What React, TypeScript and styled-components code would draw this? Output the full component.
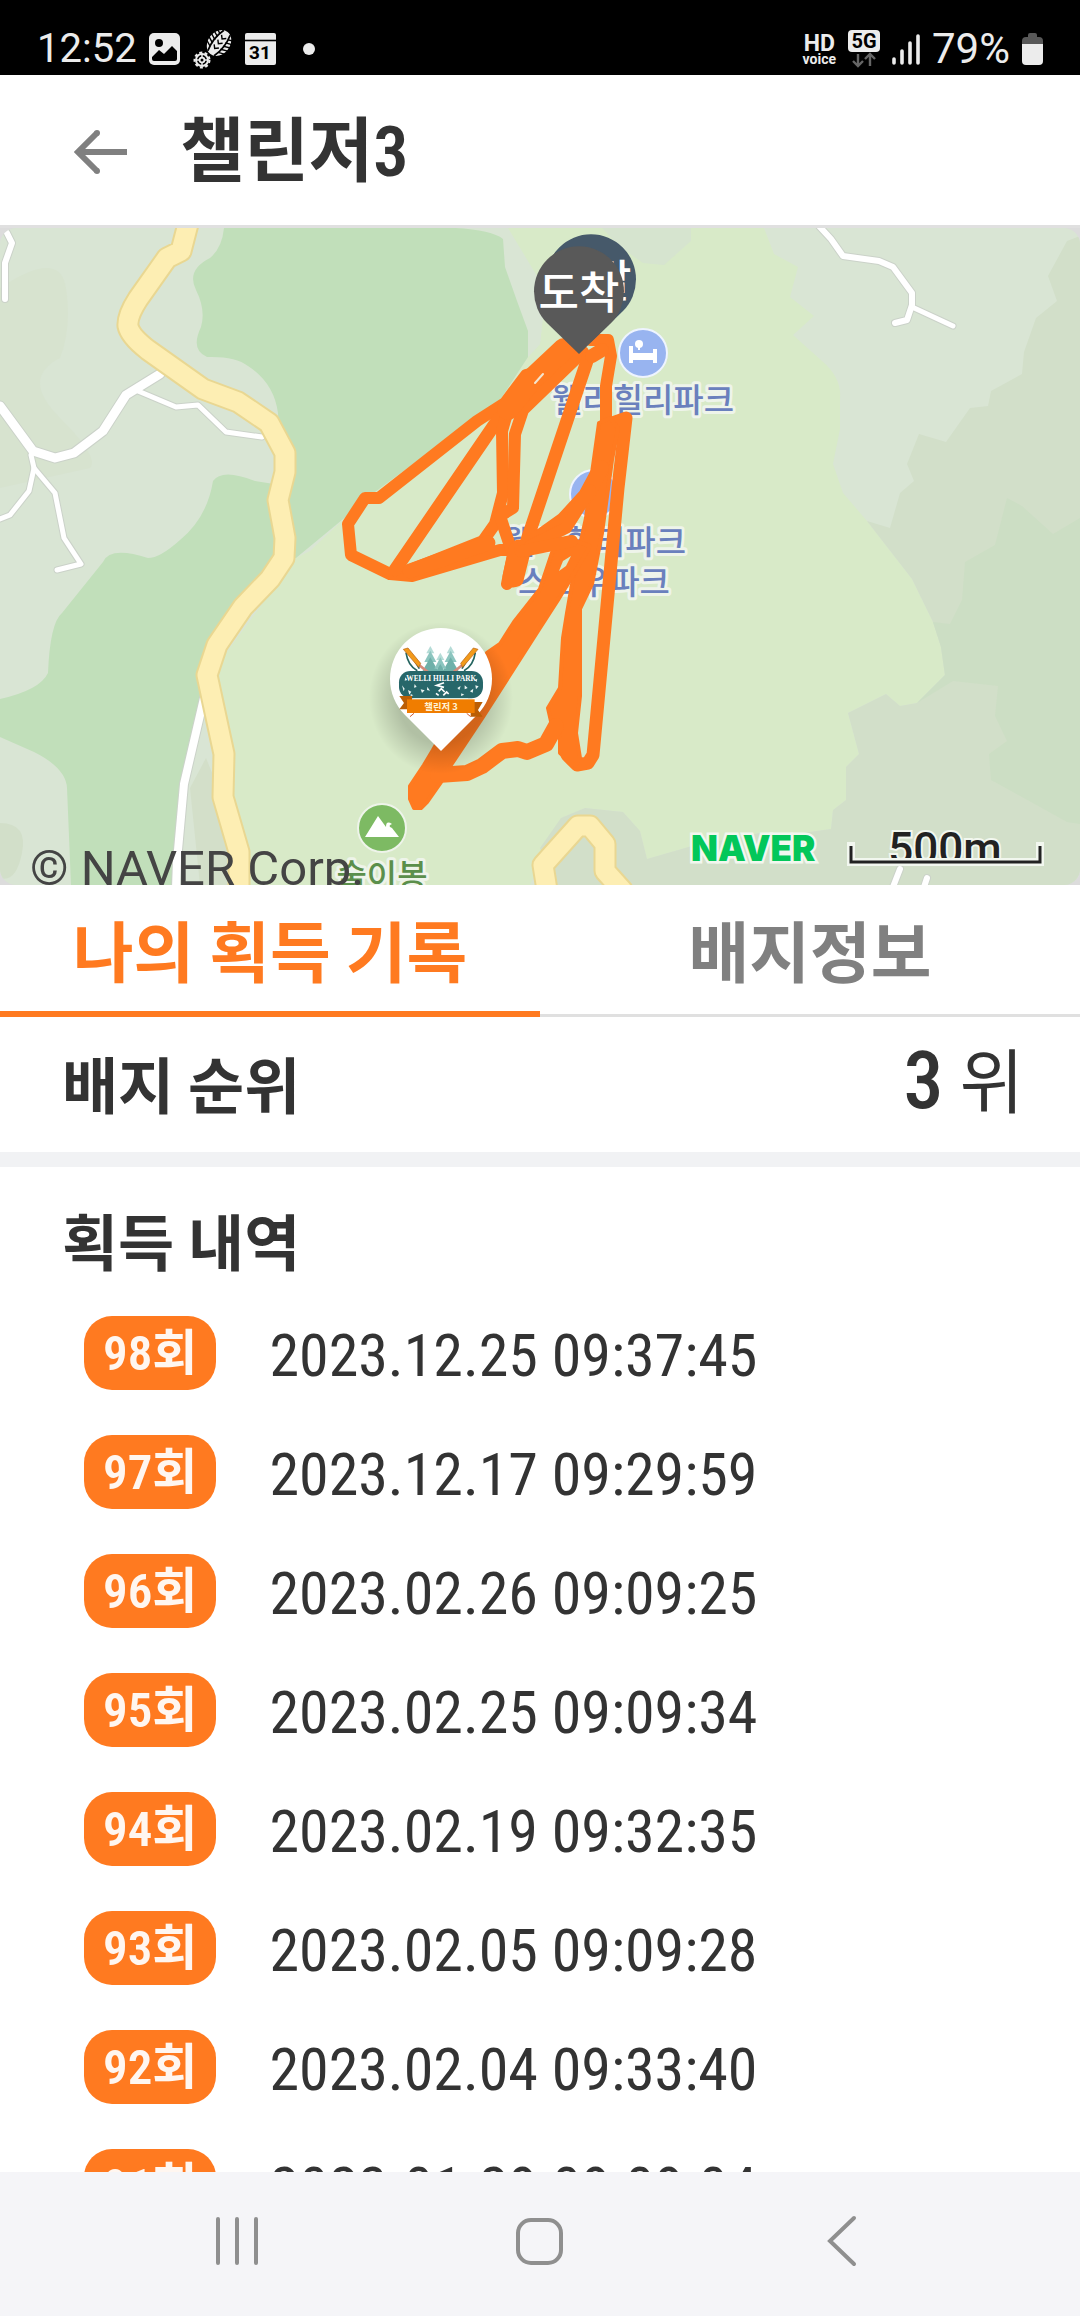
import React from "react";
import styled, { createGlobalStyle } from "styled-components";

const ORANGE = "#ff7a20";
const INK = "#333333";
const KR = `"Noto Sans CJK KR", sans-serif`;
const CONDENSED = `"Roboto Condensed", "Noto Sans CJK KR", Roboto, sans-serif`;

const GlobalStyle = createGlobalStyle`
  * { box-sizing: border-box; }
  body { margin: 0; background: #fff; }
  button { border: 0; padding: 0; background: none; font: inherit; color: inherit; cursor: pointer; }
  h1, h2, ul { margin: 0; padding: 0; }
  svg { display: block; }
`;

const Screen = styled.div`
  display: flex;
  flex-direction: column;
  height: 100vh;
  overflow: hidden;
  background: #fff;
  color: ${INK};
  font-family: ${CONDENSED};
`;

/* ---------- status bar ---------- */

const StatusBar = styled.div`
  flex: none;
  display: flex;
  justify-content: space-between;
  align-items: flex-end;
  height: 75px;
  padding: 0 37px 6px;
  background: #000;
  color: #ececec;
  font-family: Roboto, sans-serif;
`;

const StatusGroup = styled.div<{ $gap: number }>`
  display: flex;
  align-items: center;
  gap: ${(p) => p.$gap}px;
  height: 40px;
`;

const StatusText = styled.span<{ $size: number }>`
  font-size: ${(p) => p.$size}px;
  line-height: 40px;
`;

const HdVoice = styled.span`
  display: flex;
  flex-direction: column;
  align-items: center;
  font-weight: 700;
`;

const HdLine = styled.span<{ $size: number; $line: number }>`
  font-size: ${(p) => p.$size}px;
  line-height: ${(p) => p.$line}px;
`;

/* ---------- header ---------- */

const Header = styled.header`
  flex: none;
  display: flex;
  align-items: center;
  gap: 50px;
  height: 153px;
  padding: 4px 72px 0;
  border-bottom: 3px solid #e0e0e0;
`;

const Title = styled.h1`
  font-size: 70px;
  line-height: 80px;
  font-weight: 600;
`;

/* ---------- map ---------- */

const MapPanel = styled.section`
  flex: none;
  height: 657px;
  background: #dcdcdc;
`;

const MapCanvas = styled.svg`
  width: 100%;
  height: 100%;
  border-radius: 16px;
`;

const PoiLabel = styled.text`
  font: 500 33px ${KR};
  fill: #6a80bd;
  stroke: #eef4ea;
  stroke-width: 6px;
  stroke-linejoin: round;
  paint-order: stroke;
  text-anchor: middle;
`;

const PeakLabel = styled(PoiLabel)`
  fill: #5b8f4b;
`;

const PinLabel = styled.text`
  font: 500 44px ${KR};
  fill: #fff;
  text-anchor: middle;
`;

const Copyright = styled.text`
  font: 400 49px Roboto, sans-serif;
  fill: #444;
`;

const MapBrand = styled.text`
  font: 900 35px Inter, sans-serif;
  fill: #03c75a;
  stroke: #f2f7ef;
  stroke-width: 5px;
  paint-order: stroke;
`;

const ScaleLabel = styled.text`
  font: 500 44px Roboto, sans-serif;
  fill: #222;
  stroke: #f2f7ef;
  stroke-width: 4px;
  paint-order: stroke;
  text-anchor: middle;
`;

const EmblemName = styled.text`
  font: 700 22px "Liberation Serif", serif;
  fill: #fff;
  text-anchor: middle;
`;

const EmblemRibbon = styled.text`
  font: 700 28px ${KR};
  fill: #fff3d8;
  text-anchor: middle;
`;

/* ---------- tabs ---------- */

const Tabs = styled.div`
  flex: none;
  display: grid;
  grid-template-columns: 1fr 1fr;
  height: 132px;
`;

const Tab = styled.button<{ $active?: boolean }>`
  font-family: ${KR};
  font-size: 66px;
  line-height: 80px;
  font-weight: 700;
  padding: ${(p) => (p.$active ? "0" : "0 0 3px")};
  color: ${(p) => (p.$active ? ORANGE : "#808080")};
  border-bottom: ${(p) => (p.$active ? `6px solid ${ORANGE}` : "3px solid #e0e0e0")};
`;

/* ---------- content ---------- */

const RankRow = styled.section`
  flex: none;
  display: flex;
  align-items: center;
  justify-content: space-between;
  height: 150px;
  padding: 0 56px 4px 62px;
  border-bottom: 15px solid #f1f2f4;
`;

const SectionTitle = styled.h2`
  font-family: ${KR};
  font-size: 61px;
  line-height: 80px;
  font-weight: 700;
`;

const Rank = styled.span`
  font-size: 70px;
  line-height: 88px;
  font-weight: 400;
`;

const RankNumber = styled.span`
  font-size: 80px;
  font-weight: 500;
`;

const History = styled.section`
  flex: 1;
  min-height: 0;
  overflow: hidden;
  padding: 33px 62px 0;
`;

const HistoryList = styled.ul`
  display: flex;
  flex-direction: column;
  gap: 45px;
  padding: 36px 22px 0;
  list-style: none;
`;

const HistoryItem = styled.li`
  display: flex;
  align-items: flex-start;
  gap: 53px;
  height: 74px;
`;

const CountBadge = styled.span`
  height: 74px;
  padding: 0 19px;
  border-radius: 28px;
  background: ${ORANGE};
  color: #fff6f0;
  font-size: 49px;
  line-height: 76px;
  font-weight: 600;
`;

const Stamp = styled.time`
  font-size: 60px;
  line-height: 80px;
`;

/* ---------- navigation ---------- */

const NavBar = styled.nav`
  flex: none;
  display: grid;
  grid-template-columns: 1fr 1fr 1fr;
  height: 144px;
  padding: 0 85px;
  background: #f5f5f8;
`;

const NavButton = styled.button`
  display: flex;
  align-items: center;
  justify-content: center;
  padding-bottom: 6px;
`;

/* ---------- icons ---------- */

const PictureIcon = () => (
  <svg width="32" height="32" viewBox="0 0 32 32">
    <rect width="31" height="32" rx="5" fill="#ececec" />
    <circle cx="10" cy="10" r="4" fill="#000" />
    <path d="M3 24 L10 17 L15 21 L23 13 L28 18 V26 Q28 28 26 28 H5 Q3 28 3 26Z" fill="#000" />
  </svg>
);

const BootprintIcon = () => (
  <svg width="40" height="40" viewBox="0 0 40 40">
    <g transform="rotate(38 26 14)">
      <ellipse cx="26" cy="14" rx="11" ry="14" fill="#ececec" />
      <path
        d="M14 3l7 3M14 7l7 3M14 11l7 3M14 15l7 3M14 19l7 3M38 3l-7 3M38 7l-7 3M38 11l-7 3M38 15l-7 3M38 19l-7 3"
        stroke="#000"
        strokeWidth="1.4"
      />
      <path d="M22 1q-4 13 0 26M30 1q4 13 0 26" stroke="#000" strokeWidth="1.8" fill="none" />
      <path d="M23 6l3 3 3-3M23 12l3 3 3-3M23 18l3 3 3-3" stroke="#000" strokeWidth="1.4" fill="none" />
    </g>
    <circle cx="9" cy="31" r="6" fill="none" stroke="#ececec" strokeWidth="2" />
    <circle cx="9" cy="31" r="7.500" fill="none" stroke="#ececec" strokeWidth="2" strokeDasharray="3 2.4" />
    <circle cx="9" cy="31" r="2.400" fill="none" stroke="#ececec" strokeWidth="1.8" />
    <path d="M9 25v3M9 34v3M3 31h3M12 31h3" stroke="#ececec" strokeWidth="1.5" />
  </svg>
);

const CalendarIcon = () => (
  <svg width="31" height="32" viewBox="0 0 31 32">
    <rect width="31" height="32" rx="2" fill="#ececec" />
    <path d="M0 7.500h31" stroke="#000" strokeWidth="1.6" />
    <text x="15" y="26" textAnchor="middle" fontFamily="Roboto, sans-serif" fontWeight="700" fontSize="19" fill="#000">
      31
    </text>
  </svg>
);

const DotIcon = () => (
  <svg width="12" height="12" viewBox="0 0 12 12">
    <circle cx="6" cy="6" r="6" fill="#ececec" />
  </svg>
);

const FiveGIcon = () => (
  <svg width="32" height="38" viewBox="0 0 32 38">
    <rect width="32" height="22" rx="4" fill="#ececec" />
    <text x="16" y="18" textAnchor="middle" fontFamily="Roboto, sans-serif" fontWeight="700" fontSize="20" fill="#000">
      5G
    </text>
    <path d="M10 24v12M5 31l5 5 5-5M22 36V25M17 29l5-5 5 5" stroke="#666" strokeWidth="2.4" fill="none" />
  </svg>
);

const SignalIcon = () => (
  <svg width="28" height="31" viewBox="0 0 28 31">
    <path d="M2 25v4M10 17v12M18 9v20M26 2v27" stroke="#ececec" strokeWidth="3.6" strokeLinecap="round" />
  </svg>
);

const BatteryIcon = () => (
  <svg width="21" height="32" viewBox="0 0 21 32">
    <path d="M6 2q0-2 2-2h5q2 0 2 2v2h2q4 0 4 4v3H0V8q0-4 4-4h2z" fill="#585858" />
    <path d="M0 11h21v17q0 4-4 4H4q-4 0-4-4z" fill="#ececec" />
  </svg>
);

const ArrowLeftIcon = () => (
  <svg width="58" height="46" viewBox="0 0 58 46">
    <path d="M55 23H6M25 4L6 23l19 19" fill="none" stroke="#808080" strokeWidth="6" />
    <circle cx="25" cy="4" r="3" fill="#808080" />
    <circle cx="25" cy="42" r="3" fill="#808080" />
  </svg>
);

const RecentsIcon = () => (
  <svg width="46" height="50" viewBox="0 0 46 50">
    <path d="M4 3v44M23 3v44M42 3v44" stroke="#8f8f8f" strokeWidth="4" strokeLinecap="round" />
  </svg>
);

const HomeIcon = () => (
  <svg width="50" height="50" viewBox="0 0 50 50">
    <rect x="3" y="4" width="43" height="43" rx="13" fill="none" stroke="#8f8f8f" strokeWidth="4" />
  </svg>
);

const BackIcon = () => (
  <svg width="34" height="52" viewBox="0 0 34 52">
    <path d="M28 3L4 26l24 23" fill="none" stroke="#8f8f8f" strokeWidth="4" strokeLinecap="round" />
  </svg>
);

/* ---------- map drawing ---------- */

const Terrain = () => (
  <g>
    <rect width="1080" height="657" fill="#d9e5d4" />
    <path d="M0 60Q60 20 66 60T60 130Q20 150 60 190T90 240L0 260Z" fill="#d7e3cf" />
    <path
      fill="#d8eac8"
      d="M296 330L310 323 348 287 360 275 500 172 528 129 540 116 545 70 537 48 508 0H764L774 26 798 39 790 69 814 88 793 107 822 133Q842 150 840 171V201L833 236 843 265 867 293 912 351 933 394 941 419 945 447 917 475 900 478 886 466 848 485 859 526 846 539V572L833 582 831 601 788 607 760 605 692 618 647 631 640 603 623 584 585 580 561 590 530 657H239L210 447Z"
    />
    <path d="M602 0H691V13L664 37 643 35 619 18Z" fill="#d6e4cf" />
    <path d="M503 8L512 30 537 48 545 70 540 116 528 129V103L517 73 505 39Z" fill="#d9e5d4" />
    <path
      fill="#c1dfba"
      d="M224 0Q222 20 210 30Q186 42 196 62T201 99Q190 122 207 129Q235 128 248 138Q274 155 278 185L285 330H296L348 287 360 275 500 172 528 129V103L517 73 505 39 503 11Q492 2 455 0Z"
    />
    <path
      fill="#c1dfba"
      d="M280 257L255 253Q222 240 213 253Q207 290 180 312Q160 330 148 330Q110 318 103 334L62 385Q50 395 48 445Q40 462 0 471V509L34 524Q66 540 67 560L71 657H176L186 556 210 447 285 310Z"
    />
    <path d="M206 530L190 560 200 657H236L222 569Z" fill="#d3dfc9" />
    <path d="M0 595Q28 595 22 625T0 650Z" fill="#d2dfc9" />
    <path
      fill="#d2dfc9"
      d="M1080 8L1067 13 1048 48 1057 73 1036 90 1024 124 1022 146 991 163 988 178 970 180 946 214 919 206 907 236 914 253 900 265 890 300 867 293 912 351 933 394 941 419 945 447 917 475 900 478 886 466 848 485 859 526 846 539V572L833 582 831 601 788 607 760 605 692 618 647 631 640 603 623 584 585 580 561 590 540 620 555 657H1080Z"
    />
    <path
      fill="#ccdec4"
      d="M1007 270L995 317 965 334 962 372 950 396 933 394 941 419 945 447 917 475 953 453 998 458 995 488 1007 513 989 526 991 552 1022 569 1067 594 1080 596V290L1053 306 1022 278Z"
    />
  </g>
);

const lanes = [
  { w: 9, d: "M0 178L33 223 55 230 74 225 103 203 126 167 160 146" },
  { w: 8, d: "M204 470L184 556 177 633 176 660" },
  { w: 5, d: "M31 227L34 240 29 263 10 287 0 291" },
  { w: 5, d: "M34 240L55 265 64 310 81 336 57 342" },
  { w: 5, d: "M138 163L176 179 198 177 226 204 262 209" },
  { w: 6, d: "M7 5L12 15 5 35 5 71" },
  { w: 6, d: "M819 -2L831 11 843 28 879 33 893 39 912 65V77L907 92 895 95" },
  { w: 5, d: "M912 79L953 98" },
  { w: 6, d: "M900 641L893 659M927 650L924 659" },
];

const highways = [
  "M188 -4L181 23 167 30 138 71Q127 88 128 98Q130 108 148 122L203 161 238 174 269 195 285 225V244L278 272 285 310 284 330 270 351 243 379 217 417 207 447 224 526 223 569 239 624V662",
  "M547 662L543 637 578 598H590L605 616V643L622 662",
];

const Roads = () => (
  <g fill="none" strokeLinejoin="round" strokeLinecap="round">
    {lanes.map((l) => (
      <path key={l.d} d={l.d} stroke="#cbd2c9" strokeWidth={l.w + 2} />
    ))}
    {lanes.map((l) => (
      <path key={l.d} d={l.d} stroke="#fff" strokeWidth={l.w} />
    ))}
    {highways.map((d) => (
      <path key={d} d={d} stroke="#e9d792" strokeWidth="23" />
    ))}
    {highways.map((d) => (
      <path key={d} d={d} stroke="#fdeeb3" strokeWidth="19" />
    ))}
  </g>
);

const Places = () => (
  <g>
    <g transform="translate(643 125)">
      <circle r="24" fill="#98b4f0" stroke="#eef4ff" strokeWidth="2" />
      <path d="M-12 -7V10M12 -4V10M-12 4H12" stroke="#fff" strokeWidth="4" />
      <rect x="-12" y="0" width="24" height="7" fill="#fff" />
      <circle cx="-4" cy="-9" r="4" fill="#fff" />
      <path d="M-4 -9v6" stroke="#fff" strokeWidth="2" />
    </g>
    <circle cx="594" cy="266" r="24" fill="#98b4f0" stroke="#eef4ff" strokeWidth="2" />
    <PoiLabel x="643" y="184">웰리힐리파크</PoiLabel>
    <PoiLabel x="595" y="326">웰리힐리파크</PoiLabel>
    <PoiLabel x="594" y="366">스노우파크</PoiLabel>
    <circle cx="382" cy="600" r="24" fill="#7dba63" stroke="#eef4ea" strokeWidth="2" />
    <path d="M365 609L378 588 386 599Q386 592 392 596Q387 598 392 600L399 609Z" fill="#fff" />
    <PeakLabel x="382" y="660">술이봉</PeakLabel>
  </g>
);

const Route = () => (
  <g fill="none" stroke={ORANGE} strokeWidth="12" strokeLinejoin="round" strokeLinecap="round">
    <path d="M570 112L546 142 526 147 505 175 477 193 379 270H365L348 296 351 327 390 346 412 348 500 322H520" />
    <path d="M499 190L395 342" strokeWidth="13" />
    <path d="M578 118L508 182 502 203 503 265 495 296 483 313 410 342" />
    <path d="M583 124L523 182 515 206 513 280 500 288 513 327 507 356" />
    <path d="M588 130L527 312 517 352" strokeWidth="13" />
    <path d="M519 322L513 349" strokeWidth="21" />
    <path d="M564 121L531 152 508 181" strokeWidth="22" />
    <path d="M410 343L488 315" strokeWidth="15" />
    <path d="M590 112H608L611 128 606 158V196" />
    <path d="M602 122L592 128" strokeWidth="14" />
    <path d="M612 195L626 190 618 260 593 527 588 535 577 537 567 527" strokeWidth="13" />
    <path
      strokeWidth="4"
      fill={ORANGE}
      d="M610 190L618 200 612 232 602 305 592 356 580 381V468L576 505 580 530 575 538 560 525V510L553 502 548 480 560 460 563 410 567 385 574 345 586 290 592 245 599 195Z"
    />
    <path d="M601 240L586 268 564 292 522 322" strokeWidth="16" />
    <path d="M590 262L566 300 530 318" strokeWidth="12" />
    <path
      strokeWidth="4"
      fill={ORANGE}
      d="M553 322L540 361 514 394 500 416 487 425 450 492 433 522 424 537 410 558V571L414 580H421L427 574 441 554 451 537 483 489 538 403 558 372 575 344 590 318 570 311Z"
    />
    <path d="M438 547L467 545 482 538 502 523 518 521 527 524 546 516 556 498" strokeWidth="16" />
    <path d="M522 323L572 313" strokeWidth="12" />
    <path d="M559 343L563 333 571 328 566 338Z" fill="#d8eac8" stroke="none" />
    <path d="M535 155L543 146" stroke="#f4e6cf" strokeWidth="2" />
  </g>
);

const TripPin = ({ x, y, color, children }: { x: number; y: number; color: string; children: string }) => (
  <g transform={`translate(${x} ${y})`}>
    <path d="M0 63L-32 32A45 45 0 1 1 32 32Z" fill={color} />
    <PinLabel y="18">{children}</PinLabel>
  </g>
);

const Tree = ({ x, y }: { x: number; y: number }) => (
  <g transform={`translate(${x} ${y})`}>
    <path d="M0 0L12 22H-12Z" fill="#b5dcd7" />
    <path d="M0 14L18 48H-18Z" fill="#8cc5bf" />
    <path d="M0 34L24 76H-24Z" fill="#6fb0a9" />
  </g>
);

const Pole = () => (
  <g>
    <path d="M78 98Q84 138 112 152M86 96Q104 120 118 146" fill="none" stroke="#24645f" strokeWidth="5" />
    <path d="M118 136L148 160" stroke="#d68a78" strokeWidth="8" />
    <path d="M70 88L84 84 122 130 116 142Z" fill="#f29a1b" stroke="#b35f10" strokeWidth="2" />
  </g>
);

const EmblemPin = () => (
  <g>
    <ellipse cx="441" cy="470" rx="72" ry="76" fill="url(#pinShade)" />
    <path d="M441 523L405 487A51 51 0 1 1 477 487Z" fill="#fff" />
    <g transform="translate(380 392) scale(.3333)">
      <Tree x={151} y={78} />
      <Tree x={212} y={78} />
      <Tree x={181} y={98} />
      <Pole />
      <g transform="translate(364 0) scale(-1 1)">
        <Pole />
      </g>
      <rect x="57" y="153" width="252" height="82" rx="34" fill="#27676a" />
      <path
        d="M66 196l8 10-3 8zM84 210l10 5-6 9zM104 192l6 9-8 2zM122 208l12 3-8 8zM142 200l8 12-9-2zM232 204l10-6-4 12zM254 196l9 8-9 4zM270 214l10-8-2 12zM286 196l10 3-8 9zM76 172l6 8-8 2zM92 222l8 4-8 3zM244 220l9 4-10 4zM284 180l8-4-2 10z"
        fill="#e9f4f2"
      />
      <path d="M192 188l-22 8 22 6M176 214l8-8 10 10M168 220l8 6M190 226l10-10 6 6" stroke="#fff" strokeWidth="5" fill="none" />
      <EmblemName x="184" y="182">WELLI HILLI PARK</EmblemName>
      <path d="M58 228H96V268H58L72 249ZM308 246H272V290H308L294 270Z" fill="#bb5e04" />
      <path d="M100 236H264" stroke="#d8efe9" strokeWidth="4" />
      <rect x="81" y="238" width="203" height="41" fill="#f07d00" />
      <path d="M90 290l12-10M272 290l-12-10" stroke="#c9562f" strokeWidth="3" />
      <EmblemRibbon x="183" y="269">챌린저 3</EmblemRibbon>
    </g>
  </g>
);

const ScaleBar = () => (
  <g fill="none">
    <ScaleLabel x="945" y="636">500m</ScaleLabel>
    <path d="M851 618V634H1040V618" stroke="#f2f7ef" strokeWidth="8" strokeLinecap="square" />
    <path d="M851 618V634H1040V618" stroke="#222" strokeWidth="3" />
  </g>
);

const TrailMap = () => (
  <MapCanvas viewBox="0 0 1080 657" preserveAspectRatio="xMidYMid slice" role="img" aria-label="챌린저3 코스 지도">
    <defs>
      <radialGradient id="pinShade">
        <stop offset="0.6" stopColor="#000" stopOpacity=".18" />
        <stop offset="1" stopColor="#000" stopOpacity="0" />
      </radialGradient>
    </defs>
    <Terrain />
    <Roads />
    <Places />
    <Route />
    <TripPin x={591} y={51} color="#46596a">출발</TripPin>
    <TripPin x={579} y={63} color="#595959">도착</TripPin>
    <EmblemPin />
    <Copyright x="30" y="657">© NAVER Corp.</Copyright>
    <MapBrand x="691" y="633">NAVER</MapBrand>
    <ScaleBar />
  </MapCanvas>
);

const records = [
  { count: 98, at: "2023.12.25 09:37:45" },
  { count: 97, at: "2023.12.17 09:29:59" },
  { count: 96, at: "2023.02.26 09:09:25" },
  { count: 95, at: "2023.02.25 09:09:34" },
  { count: 94, at: "2023.02.19 09:32:35" },
  { count: 93, at: "2023.02.05 09:09:28" },
  { count: 92, at: "2023.02.04 09:33:40" },
  { count: 91, at: "2023.01.29 09:09:04" },
];

export default function App() {
  return (
    <Screen>
      <GlobalStyle />
      <StatusBar>
        <StatusGroup $gap={27}>
          <StatusGroup $gap={12}>
            <StatusText $size={40}>12:52</StatusText>
            <PictureIcon />
            <BootprintIcon />
            <CalendarIcon />
          </StatusGroup>
          <DotIcon />
        </StatusGroup>
        <StatusGroup $gap={12}>
          <HdVoice>
            <HdLine $size={23} $line={19}>HD</HdLine>
            <HdLine $size={14} $line={12}>voice</HdLine>
          </HdVoice>
          <FiveGIcon />
          <SignalIcon />
          <StatusText $size={42}>79%</StatusText>
          <BatteryIcon />
        </StatusGroup>
      </StatusBar>

      <Header>
        <button type="button" aria-label="뒤로">
          <ArrowLeftIcon />
        </button>
        <Title>챌린저3</Title>
      </Header>

      <MapPanel>
        <TrailMap />
      </MapPanel>

      <Tabs role="tablist">
        <Tab type="button" role="tab" aria-selected="true" $active>
          나의 획득 기록
        </Tab>
        <Tab type="button" role="tab" aria-selected="false">
          배지정보
        </Tab>
      </Tabs>

      <RankRow>
        <SectionTitle>배지 순위</SectionTitle>
        <Rank>
          <RankNumber>3</RankNumber> 위
        </Rank>
      </RankRow>

      <History>
        <SectionTitle>획득 내역</SectionTitle>
        <HistoryList>
          {records.map((r) => (
            <HistoryItem key={r.count}>
              <CountBadge>{r.count}회</CountBadge>
              <Stamp>{r.at}</Stamp>
            </HistoryItem>
          ))}
        </HistoryList>
      </History>

      <NavBar>
        <NavButton type="button" aria-label="최근 앱">
          <RecentsIcon />
        </NavButton>
        <NavButton type="button" aria-label="홈">
          <HomeIcon />
        </NavButton>
        <NavButton type="button" aria-label="이전">
          <BackIcon />
        </NavButton>
      </NavBar>
    </Screen>
  );
}
